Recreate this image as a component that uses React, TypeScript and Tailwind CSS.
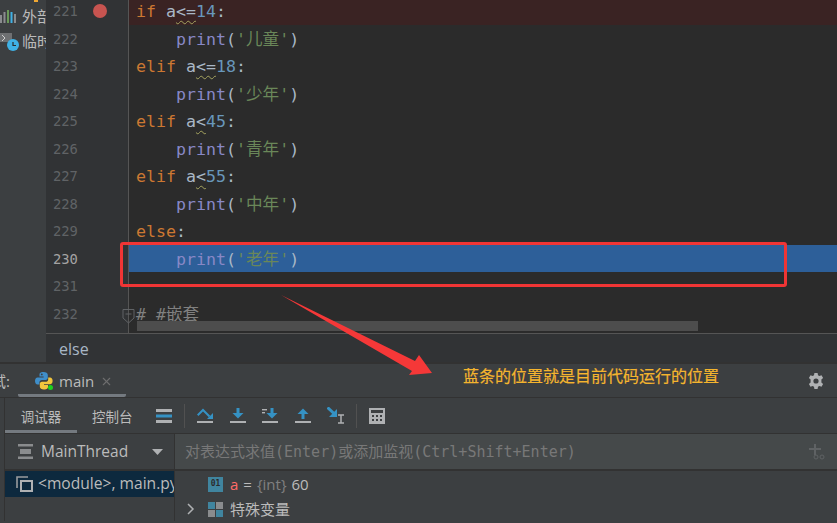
import { X } from 'lucide-react';

const mono = 'font-["DejaVu_Sans_Mono","Noto_Sans_CJK_SC",monospace]';
const ui = 'font-["Open_Sans","Noto_Sans_CJK_SC",sans-serif]';

const Kw = ({ t }: { t: string }) => <span className="text-[#cc7832]">{t}</span>;
const Num = ({ t }: { t: string }) => <span className="text-[#6897bb]">{t}</span>;
const Squig = ({ t }: { t: string }) => (
  <span className="underline decoration-wavy decoration-[#a5a35f] decoration-1 underline-offset-[3px]">{t}</span>
);

const Cond = ({ kw, op, n }: { kw: string; op: string; n: string }) => (
  <>
    <Kw t={kw} /> a<Squig t={op} />
    <Num t={n} />:
  </>
);

const Print = ({ s }: { s: string }) => (
  <span className="pl-10">
    <span className="text-[#8888c6]">print</span>(<span className="text-[#6a8759]">'{s}'</span>)
  </span>
);

const lines = [
  { n: 221, code: <Cond kw="if" op="<=" n="14" />, bg: 'bg-[#3a2323]' },
  { n: 222, code: <Print s="儿童" /> },
  { n: 223, code: <Cond kw="elif" op="<=" n="18" /> },
  { n: 224, code: <Print s="少年" /> },
  { n: 225, code: <Cond kw="elif" op="<" n="45" /> },
  { n: 226, code: <Print s="青年" /> },
  { n: 227, code: <Cond kw="elif" op="<" n="55" /> },
  { n: 228, code: <Print s="中年" /> },
  { n: 229, code: <><Kw t="else" />:</> },
  { n: 230, code: <Print s="老年" />, bg: 'bg-[#2d5f99]', current: true },
  { n: 231, code: null },
  { n: 232, code: <span className="text-[#808080]"># #嵌套</span> },
];

const StepOver = () => (
  <svg width="16" height="16" viewBox="0 0 16 16" fill="none">
    <path d="M.7 7.3 L6 2 L12.5 8.5" stroke="#3592c4" strokeWidth="2" />
    <path d="M16 5 V11 H10 Z" fill="#3592c4" />
    <rect y="13" width="16" height="2" fill="#afb1b3" />
  </svg>
);
const StepInto = () => (
  <svg width="16" height="16" viewBox="0 0 16 16" fill="none">
    <path d="M8 0 V6" stroke="#3592c4" strokeWidth="3" />
    <path d="M2.5 5 H13.5 L8 10.5 Z" fill="#3592c4" />
    <rect y="13" width="16" height="2" fill="#afb1b3" />
  </svg>
);
const StepMine = () => (
  <svg width="16" height="16" viewBox="0 0 16 16" fill="none">
    <path d="M10 0 V6" stroke="#3592c4" strokeWidth="3" />
    <path d="M4.5 5 H15.5 L10 10.5 Z" fill="#3592c4" />
    <rect x="0" y="1" width="5" height="1.4" fill="#afb1b3" />
    <rect x="0" y="4" width="3" height="1.4" fill="#afb1b3" />
    <rect y="13" width="16" height="2" fill="#afb1b3" />
  </svg>
);
const StepOut = () => (
  <svg width="16" height="16" viewBox="0 0 16 16" fill="none">
    <path d="M8 11 V5" stroke="#3592c4" strokeWidth="3" />
    <path d="M2.5 6 H13.5 L8 .5 Z" fill="#3592c4" />
    <rect y="13" width="16" height="2" fill="#afb1b3" />
  </svg>
);
const RunToCursor = () => (
  <svg width="18" height="17" viewBox="0 0 18 17" fill="none">
    <path d="M.5 .5 L7 6.5" stroke="#3592c4" strokeWidth="3" />
    <path d="M10 2 V10 H2 Z" fill="#3592c4" />
    <path d="M11 8 H17 M14 8 V16 M11 16 H17" stroke="#afb1b3" strokeWidth="1.5" />
  </svg>
);
const Calculator = () => (
  <svg width="16" height="16" viewBox="0 0 16 16">
    <path d="M0 0 H16 V16 H0 Z M2 2 V5 H14 V2 Z" fill="#afb1b3" fillRule="evenodd" />
    <path d="M3 7 H5 V9 H3 Z M7 7 H9 V9 H7 Z M11 7 H13 V9 H11 Z M3 11 H5 V13 H3 Z M7 11 H9 V13 H7 Z M11 11 H13 V13 H11 Z" fill="#3c3f41" />
  </svg>
);
const Gear = () => (
  <svg width="16" height="16" viewBox="0 0 16 16">
    <path
      fillRule="evenodd"
      fill="#afb1b3"
      d="M6.4 0 H9.6 L10 2.2 L11.4 3 L13.5 2.2 L15.1 5 L13.4 6.4 V8 V9.6 L15.1 11 L13.5 13.8 L11.4 13 L10 13.8 L9.6 16 H6.4 L6 13.8 L4.6 13 L2.5 13.8 L0.9 11 L2.6 9.6 V6.4 L0.9 5 L2.5 2.2 L4.6 3 L6 2.2 Z M8 5.4 A2.6 2.6 0 1 0 8 10.6 A2.6 2.6 0 1 0 8 5.4 Z"
    />
  </svg>
);
const PythonLogo = () => (
  <svg width="18" height="18" viewBox="0 0 18 18" className="shrink-0">
    <path d="M8.5 0 C5 0 4.5 1.4 4.5 3 V4.6 H8.6 V5.4 H2.6 C1 5.4 0 7 0 9 C0 11 1 12.4 2.6 12.4 H4.4 V10.4 C4.4 9 5.6 8 7 8 H10.6 C12 8 12.8 7 12.8 5.8 V3 C12.8 1 11 0 8.5 0 Z" fill="#3f8ec9" />
    <path d="M8.8 17.6 C12.4 17.6 13 16.2 13 14.6 V13 H9 V12.2 H15 C16.6 12.2 17.6 10.8 17.6 8.8 C17.6 6.8 16.6 5.4 15 5.4 H13.2 V7.4 C13.2 8.8 12 9.8 10.6 9.8 H7 C5.6 9.8 4.8 10.8 4.8 12 V14.6 C4.8 16.6 6.6 17.6 8.8 17.6 Z" fill="#f2c53d" />
    <circle cx="6.8" cy="2.4" r="0.9" fill="#3c3f41" />
    <circle cx="15.5" cy="15.5" r="2.5" fill="#1fd01f" />
  </svg>
);

export default function App() {
  return (
    <div className={`relative w-[837px] h-[523px] overflow-hidden bg-[#3c3f41] ${ui}`}>
      <div className="flex h-[364px] border-b-2 border-[#323232]">
        {/* left tool strip */}
        <div className="relative w-[46px] shrink-0 overflow-hidden pt-[7px] text-[15px] leading-[19px] text-[#bbbbbb]">
          <div className="absolute left-[34px] top-0 h-[2px] w-[4px] bg-[#f0a732]" />
          <div className="flex items-center gap-[4px] whitespace-nowrap">
            <svg width="18" height="13" viewBox="0 0 18 13" className="shrink-0">
              <path d="M0 5 H2 V13 H0 Z" fill="#8a8c8e" />
              <path d="M3.5 2 H5.5 V13 H3.5 Z" fill="#8a8c8e" />
              <path d="M7 0 H9 V13 H7 Z" fill="#6a9a59" />
              <path d="M10.5 2 H12.5 V13 H10.5 Z" fill="#3fb1e5" />
              <path d="M14 4 H16 V13 H14 Z" fill="#8a8c8e" />
            </svg>
            <span>外部库</span>
          </div>
          <div className="mt-[6px] flex items-center gap-[2px] whitespace-nowrap">
            <svg width="20" height="18" viewBox="0 0 20 18" className="shrink-0">
              <path d="M0 0 H12 V9 H0 Z" fill="#6e7072" />
              <path d="M2 2 L5 5 L2 8" stroke="#d0d0d0" fill="none" />
              <circle cx="13" cy="12" r="6" fill="#3fb1e5" />
              <path d="M13 9 V12.5 H16" stroke="#2b2b2b" strokeWidth="1.2" fill="none" />
            </svg>
            <span>临时文件</span>
          </div>
        </div>

        <div className="flex flex-col flex-1 min-w-0">
          {/* editor */}
          <div className="relative flex h-[333px] overflow-hidden bg-[#2b2b2b]">
            <div className={`relative w-[83px] shrink-0 border-r border-[#555555] bg-[#313335] pl-[7px] ${mono} text-[13.8px]`}>
              <div className="-mt-[3px]">
                {lines.map(l => (
                  <div key={l.n} className={`h-[27.5px] leading-[29.5px] ${l.current ? 'text-[#a4a3a3]' : 'text-[#606366]'}`}>
                    {l.n}
                  </div>
                ))}
              </div>
              <div className="absolute left-[47px] top-[4px] size-[14px] rounded-full bg-[#c75450]" />
              <svg width="13" height="15" viewBox="0 0 13 15" className="absolute left-[76px] top-[309px]" fill="none">
                <path d="M1 .5 H12 V9 L6.5 14 L1 9 Z M3.5 5 H9.5" stroke="#606366" />
              </svg>
            </div>
            <div className={`flex-1 min-w-0 ${mono} text-[16.6px] text-[#a9b7c6]`}>
              <div className="-mt-[3px]">
                {lines.map(l => (
                  <div key={l.n} className={`h-[27.5px] leading-[29px] pl-[7px] whitespace-pre ${l.bg ?? ''}`}>
                    {l.code}
                  </div>
                ))}
              </div>
            </div>
            <div className="absolute left-[91px] top-[321px] h-[10px] w-[561px] bg-[#4d4d4d]" />
          </div>
          {/* breadcrumb */}
          <div className="flex h-[29px] items-center border-t border-[#555555] bg-[#313335] pl-[13px] pt-[1px] text-[16px] text-[#a9b7c6]">
            else
          </div>
        </div>
      </div>

      {/* debug tool window header */}
      <div className="flex h-[34px] items-center border-b border-[#323232]">
        <div className="flex w-[10px] shrink-0 justify-end overflow-hidden whitespace-nowrap pt-[2px] text-[15px] text-[#bbbbbb]">
          <span className="shrink-0">调试:</span>
        </div>
        <div className="ml-[8px] flex h-full w-[108px] items-center rounded-b-[2px] border-b-[3px] border-[#747a80] pl-[17px] pt-[4px] text-[#bbbbbb]">
          <PythonLogo />
          <span className="ml-[6px] text-[15px]">main</span>
          <X size={13} className="ml-[6px] text-[#6e6e6e]" />
        </div>
        <div className="ml-auto mr-[13px]">
          <Gear />
        </div>
      </div>

      <div className="ml-[4px] border-l border-[#323232]">
        {/* debugger tabs and stepping toolbar */}
        <div className="flex h-[36px] items-center border-b border-[#323232] text-[13.5px] text-[#bbbbbb]">
          <div className="flex h-full w-[72px] items-center justify-center border-b-[3px] border-[#747a80] pt-[6px]">调试器</div>
          <div className="ml-[15px] w-[40px] whitespace-nowrap pt-[3px]">控制台</div>
          <svg width="16" height="16" viewBox="0 0 16 16" className="ml-[24px]">
            <rect y="1" width="16" height="3" fill="#afb1b3" />
            <rect y="6.5" width="16" height="3" fill="#3592c4" />
            <rect y="12" width="16" height="3" fill="#afb1b3" />
          </svg>
          <div className="ml-[12px] mr-[12px] h-[24px] w-px bg-[#515151]" />
          <div className="flex items-center gap-[16.5px]">
            <StepOver />
            <StepInto />
            <StepMine />
            <StepOut />
            <RunToCursor />
          </div>
          <div className="ml-[11px] mr-[12px] h-[24px] w-px bg-[#515151]" />
          <Calculator />
        </div>

        <div className="flex h-[87px]">
          {/* frames */}
          <div className="w-[170px] shrink-0 overflow-hidden border-r border-[#323232]">
            <div className="flex h-[37px] items-center border-b-2 border-[#323232] pl-[13px] text-[15.5px] text-[#bbbbbb]">
              <svg width="15" height="15" viewBox="0 0 15 15" className="shrink-0">
                <path d="M0 0 H15 V2.5 H0 Z M2 5 H13 V10 H2 Z M0 12.5 H15 V15 H0 Z" fill="#8a8c8e" />
              </svg>
              <span className="ml-[8px] pt-[1px]">MainThread</span>
              <svg width="11" height="6" viewBox="0 0 11 6" className="ml-[24px] shrink-0">
                <path d="M0 0 H11 L5.5 6 Z" fill="#afb1b3" />
              </svg>
            </div>
            <div className="flex h-[26px] items-center bg-[#0d293e] pl-[11px] text-[15.6px] whitespace-nowrap text-[#bbbbbb]">
              <svg width="17" height="16" viewBox="0 0 17 16" className="shrink-0" fill="none">
                <path d="M1 12 V1 H12" stroke="#9a9c9e" strokeWidth="1.6" />
                <rect x="5" y="5" width="11" height="10" stroke="#afb1b3" strokeWidth="2" />
              </svg>
              <span className="ml-[5px]">&lt;module&gt;, main.py:230</span>
            </div>
          </div>

          {/* watches and variables */}
          <div className="flex-1 min-w-0">
            <div className="h-[37px] border-b-2 border-[#323232]">
              <div className="flex h-[35px] items-center justify-between bg-[#45494a] pl-[10px] pr-[12px]">
                <span className={`${mono} pt-[1px] text-[15px] text-[#787878]`}>对表达式求值(Enter)或添加监视(Ctrl+Shift+Enter)</span>
                <svg width="16" height="16" viewBox="0 0 16 16" fill="none" stroke="#5f6264">
                  <path d="M0 5 H12 M6 0 V11" strokeWidth="2" />
                  <circle cx="7" cy="13" r="2" />
                  <circle cx="13" cy="13" r="2" />
                </svg>
              </div>
            </div>
            <div className="flex h-[26px] items-center pl-[33px] text-[15px] text-[#bbbbbb]">
              <span className={`${mono} flex size-[15px] items-center justify-center bg-[#40859f] text-[8px] leading-none font-bold text-[#2b2b2b]`}>01</span>
              <span className="ml-[7px] text-[#ff6b68]">a</span>
              <span className="ml-[5px]">=</span>
              <span className="ml-[5px] text-[#808080]">{'{int}'}</span>
              <span className="ml-[5px]">60</span>
            </div>
            <div className="flex h-[24px] items-center pl-[12px] text-[15px] text-[#bbbbbb]">
              <svg width="8" height="12" viewBox="0 0 8 12" fill="none" stroke="#afb1b3" strokeWidth="1.5">
                <path d="M1 1 L6 6 L1 11" />
              </svg>
              <svg width="15" height="15" viewBox="0 0 15 15" className="ml-[13px]">
                <rect width="7" height="7" fill="#40859f" />
                <rect x="8" width="7" height="7" fill="#8a8c8e" />
                <rect y="8" width="7" height="7" fill="#8a8c8e" />
                <rect x="8" y="8" width="7" height="7" fill="#40859f" />
              </svg>
              <span className="ml-[7px]">特殊变量</span>
            </div>
          </div>
        </div>
      </div>

      {/* annotation painted over the screenshot */}
      <div className="absolute left-[120px] top-[242px] h-[45px] w-[667px] rounded-[3px] border-[3px] border-[#f03535]" />
      <svg width="837" height="523" className="absolute left-0 top-0 pointer-events-none">
        <path d="M281 295 L415 361 L419 355 L432 373 L409 375 L412 371 Z" fill="#f53838" />
      </svg>
      <div className="absolute left-[463px] top-[365px] text-[16px] leading-[22px] text-[#f5b52e] [-webkit-text-stroke:0.2px_#f5b52e]">
        蓝条的位置就是目前代码运行的位置
      </div>
    </div>
  );
}
